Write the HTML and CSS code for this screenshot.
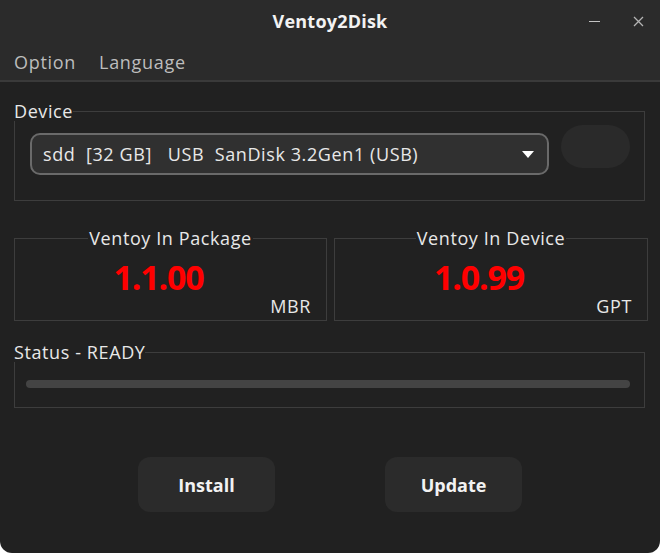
FILE: index.html
```html
<!DOCTYPE html>
<html lang="en">
<head>
    <meta charset="UTF-8">
    <meta name="viewport" content="width=device-width, initial-scale=1.0">
    <title>Ventoy2Disk</title>
    <link rel="stylesheet" href="styles.css">
</head>
<body>
    <div class="window">
        <header class="titlebar">
            <span></span>
            <span class="title">Ventoy2Disk</span>
            <div class="controls">
                <span class="ctl-min"></span>
                <svg class="ctl-close" width="11" height="11" viewBox="0 0 11 11">
                    <path d="M1 1 L10 10 M10 1 L1 10" stroke="#b4b4b4" stroke-width="1.3" fill="none"/>
                </svg>
            </div>
        </header>

        <nav class="menubar">
            <a href="#">Option</a>
            <a href="#">Language</a>
        </nav>

        <main class="content">
            <fieldset class="group device-group">
                <legend>Device</legend>
                <div class="device-row">
                    <div class="combo">
                        <span class="combo-text">sdd  [32 GB]   USB  SanDisk 3.2Gen1 (USB)</span>
                        <span class="combo-arrow"></span>
                    </div>
                    <button class="secure-btn"></button>
                </div>
            </fieldset>

            <div class="version-row">
                <fieldset class="group version-box">
                    <legend>Ventoy In Package</legend>
                    <div class="version">1.1.00</div>
                    <div class="part-style">MBR</div>
                </fieldset>
                <fieldset class="group version-box">
                    <legend>Ventoy In Device</legend>
                    <div class="version">1.0.99</div>
                    <div class="part-style">GPT</div>
                </fieldset>
            </div>

            <fieldset class="group status-group">
                <legend>Status - READY</legend>
                <div class="progress-wrap">
                    <div class="progress"></div>
                </div>
            </fieldset>

            <div class="actions">
                <button class="action-btn">Install</button>
                <button class="action-btn">Update</button>
            </div>
        </main>
    </div>
</body>
</html>
```

FILE: styles.css
```css
* {
    margin: 0;
    padding: 0;
    box-sizing: border-box;
    font-family: 'Open Sans', 'Noto Sans', sans-serif;
}

:root {
    --bar: #2b2b2b;
    --background: #212121;
    --border: #3d3d3d;
    --text: #e8e8e8;
    --muted: #bdbdbd;
    --red: #ff0000;
}

body {
    background: #ffffff;
    width: 660px;
    height: 553px;
}

.window {
    height: 553px;
    background: var(--background);
    color: var(--text);
    border-radius: 0 0 12px 12px;
    overflow: hidden;
    display: flex;
    flex-direction: column;
}

.titlebar {
    height: 42px;
    background: var(--bar);
    display: grid;
    grid-template-columns: 1fr auto 1fr;
    align-items: center;
}

.title {
    font-size: 18px;
    font-weight: 700;
    letter-spacing: 0.2px;
    color: #f2f2f2;
}

.controls {
    display: flex;
    justify-content: flex-end;
    align-items: center;
    gap: 33px;
    padding-right: 16px;
}

.ctl-min {
    width: 11px;
    height: 1px;
    background: #c4c4c4;
    margin-top: 1px;
}

.ctl-close {
    display: block;
    margin-top: 1px;
}

.menubar {
    height: 40px;
    background: var(--bar);
    border-bottom: 2px solid #3a3a3a;
    display: flex;
    align-items: center;
    gap: 23px;
    padding: 2px 14px 0;
}

.menubar a {
    color: var(--muted);
    text-decoration: none;
    font-size: 18px;
    letter-spacing: 0.7px;
}

.content {
    padding: 19px 14px 0;
    flex: 1;
}

.group {
    border: 1px solid var(--border);
    padding: 0;
    min-width: 0;
}

.group legend {
    font-size: 18px;
    line-height: 20px;
    letter-spacing: 0.6px;
    color: var(--text);
    padding: 0;
    margin-left: -1px;
}

.device-group {
    margin-right: 1px;
}

.device-row {
    display: flex;
    align-items: flex-start;
    gap: 12px;
    padding: 12px 14px 25px 15px;
}

.combo {
    flex: 1;
    height: 42px;
    background: #303030;
    border: 2px solid #6a6a6a;
    border-radius: 10px;
    display: flex;
    align-items: center;
    justify-content: space-between;
    padding: 0 13px 0 11px;
}

.combo-text {
    white-space: pre;
    font-size: 18px;
    letter-spacing: 0.6px;
    color: var(--text);
}

.combo-arrow {
    width: 0;
    height: 0;
    border-left: 6px solid transparent;
    border-right: 6px solid transparent;
    border-top: 7px solid #ffffff;
}

.secure-btn {
    width: 69px;
    height: 43px;
    margin-top: -8px;
    border: none;
    border-radius: 22px;
    background: #2a2a2a;
}

.version-row {
    display: grid;
    grid-template-columns: 313px 314px;
    gap: 7px;
    margin-top: 27px;
}

.version-box {
    height: 93px;
    display: flex;
    flex-direction: column;
}

.version-box legend {
    margin: 0 auto;
    padding: 0 1px;
}

.version {
    font-size: 34px;
    font-weight: 700;
    letter-spacing: -1.2px;
    color: var(--red);
    text-align: center;
    line-height: 40px;
    padding-right: 24px;
    margin-top: 9px;
}

.part-style {
    font-size: 18px;
    line-height: 20px;
    letter-spacing: 0.6px;
    text-align: right;
    padding-right: 15px;
    margin-top: -1px;
}

.status-group {
    margin-top: 21px;
    margin-right: 1px;
}

.progress-wrap {
    padding: 18px 14px 19px 11px;
}

.progress {
    height: 8px;
    border-radius: 4px;
    background: #444444;
}

.actions {
    display: flex;
    justify-content: center;
    gap: 110px;
    margin-top: 49px;
}

.action-btn {
    width: 137px;
    height: 55px;
    border: none;
    border-radius: 12px;
    background: #2b2b2b;
    color: #f2f2f2;
    font-size: 18px;
    font-weight: 700;
}
```
